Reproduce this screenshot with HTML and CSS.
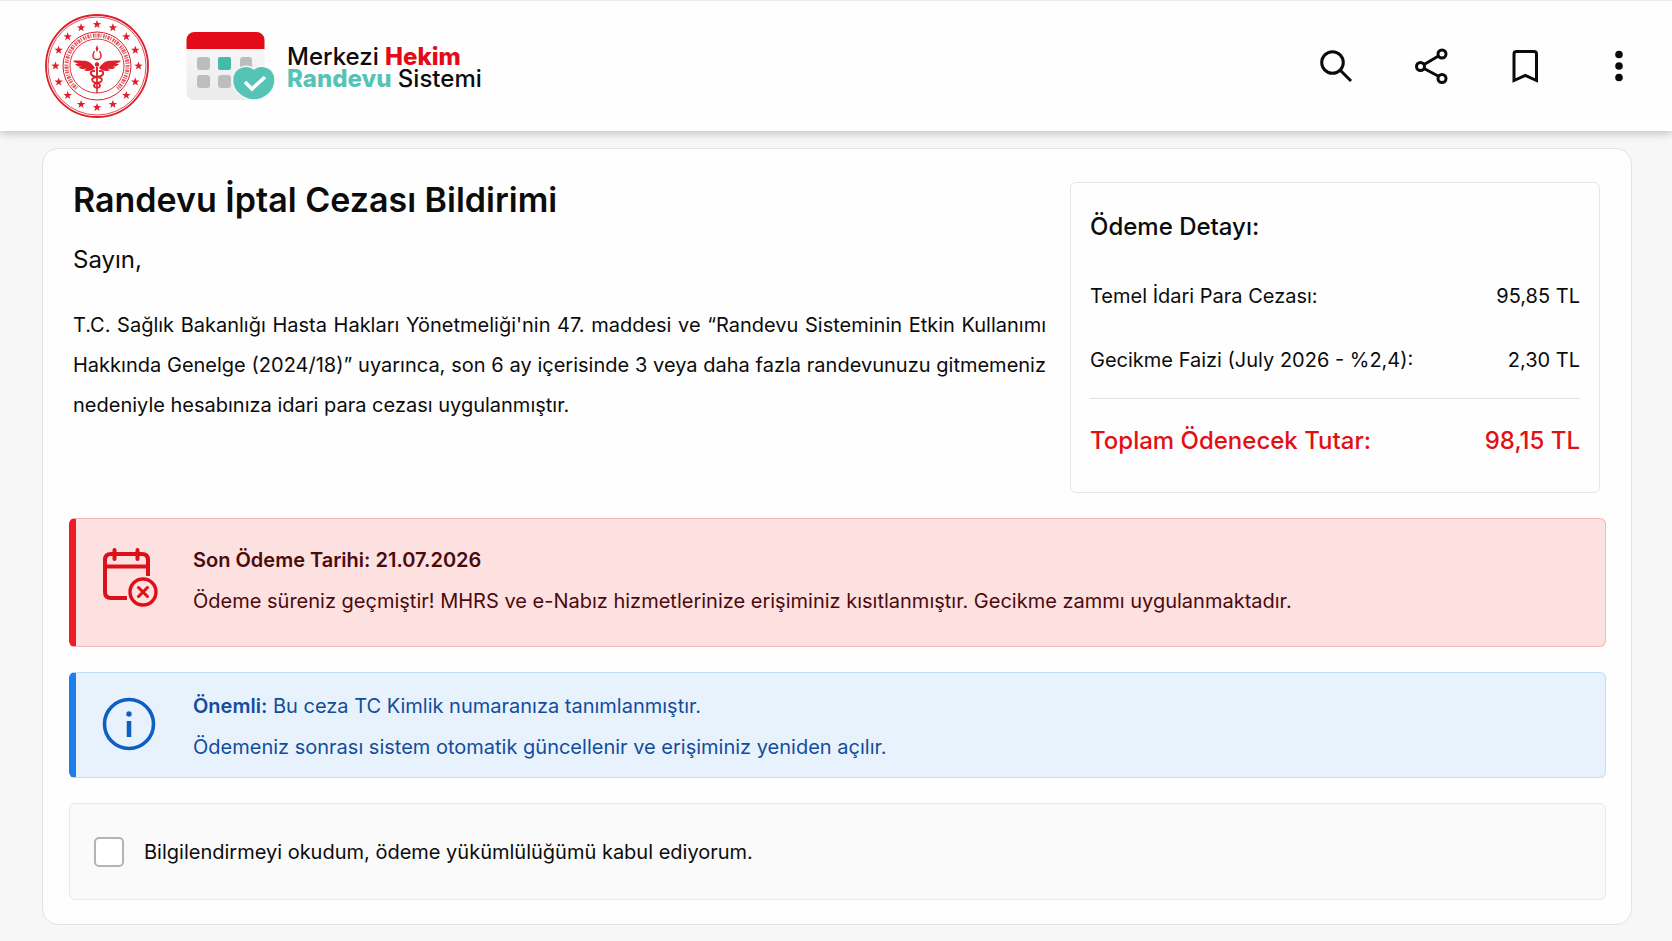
FILE: index.html
```html
<!DOCTYPE html>
<html lang="tr">
<head>
    <meta charset="UTF-8">
    <meta name="viewport" content="width=device-width, initial-scale=1.0">
    <title>Randevu İptal Cezası Bildirimi</title>
    <link rel="stylesheet" href="styles.css">
</head>
<body>
    <header class="topbar">
        <svg class="seal" viewBox="-53 -53 106 106" aria-hidden="true">
            <defs>
                <path id="star" d="M0 -4.4 L1.1 -1.4 L4.2 -1.3 L1.7 0.6 L2.6 3.6 L0 1.8 L-2.6 3.6 L-1.7 0.6 L-4.2 -1.3 L-1.1 -1.4 Z"/>
            </defs>
            <g fill="none" stroke="#dc1f2a">
                <circle r="51" stroke-width="1.8"/>
                <circle r="49" stroke-width="0.8"/>
                <circle r="34" stroke-width="1"/>
                <circle r="27" stroke-width="0.9"/>
                <path d="M-20.5 22.5 A30.5 30.5 0 1 1 20.5 22.5" stroke-width="4" stroke-dasharray="1.1 1 2.2 .9 1 1.6 1.6 .8" opacity=".75"/>
            </g>
            <g fill="#dc1f2a">
                <use href="#star" x="0" y="-41.5"/>
                <use href="#star" x="15.9" y="-38.3"/>
                <use href="#star" x="29.3" y="-29.3"/>
                <use href="#star" x="38.3" y="-15.9"/>
                <use href="#star" x="41.5" y="0"/>
                <use href="#star" x="38.3" y="15.9"/>
                <use href="#star" x="29.3" y="29.3"/>
                <use href="#star" x="15.9" y="38.3"/>
                <use href="#star" x="0" y="41.5"/>
                <use href="#star" x="-15.9" y="38.3"/>
                <use href="#star" x="-29.3" y="29.3"/>
                <use href="#star" x="-38.3" y="15.9"/>
                <use href="#star" x="-41.5" y="0"/>
                <use href="#star" x="-38.3" y="-15.9"/>
                <use href="#star" x="-29.3" y="-29.3"/>
                <use href="#star" x="-15.9" y="-38.3"/>
                <!-- wings -->
                <path d="M-2 2 C-5 -3 -9 -5.5 -14 -5.3 C-18 -5.3 -21 -6 -24 -5 C-22.5 -3.5 -20.5 -2.8 -18.5 -2.6 L-22 -1.8 C-20 .2 -18 .6 -15.8 .4 L-18.5 1.8 C-15.5 3.6 -12 3.2 -10.5 2.2 L-13 4.3 C-9 5.6 -5 5 -2 2 Z"/>
                <path d="M2 2 C5 -3 9 -5.5 14 -5.3 C18 -5.3 21 -6 24 -5 C22.5 -3.5 20.5 -2.8 18.5 -2.6 L22 -1.8 C20 .2 18 .6 15.8 .4 L18.5 1.8 C15.5 3.6 12 3.2 10.5 2.2 L13 4.3 C9 5.6 5 5 2 2 Z"/>
                <path d="M0 -21 L1.4 -17 L0 -14 L-1.4 -17 Z"/>
                <circle cy="-1.5" r="2.2"/>
                <path d="M-1 1 H1 L.7 27 H-.7 Z"/>
            </g>
            <g fill="none" stroke="#dc1f2a" stroke-width="1.8">
                <path d="M-2.5 -15 C-5.5 -10 -4 -6.5 0 -6.5 C4 -6.5 5.5 -10 2.5 -15" stroke-width="1.3"/>
                <path d="M-2 5 C-8 4 -8 10 0 11 C7 12 6 16 0 17 C-4 18 -4 21 0 22"/>
                <path d="M2 5 C8 4 8 10 0 11 C-7 12 -6 16 0 17 C4 18 4 21 0 22"/>
            </g>
        </svg>

        <div class="brand">
            <svg class="brand-mark" viewBox="0 0 90 70" aria-hidden="true">
                <defs>
                    <linearGradient id="page" x1="0" y1="0" x2="0" y2="1">
                        <stop offset="0.25" stop-color="#f6f6f6"/>
                        <stop offset="1" stop-color="#ebebeb"/>
                    </linearGradient>
                </defs>
                <rect x="0.5" y="1" width="78" height="68" rx="7" fill="url(#page)"/>
                <path d="M0.5 18 V9 A8 8 0 0 1 8.5 1 H70.5 A8 8 0 0 1 78.5 9 V18 Z" fill="#e30b17"/>
                <g fill="#bdbdbd">
                    <rect x="11" y="26" width="13" height="13" rx="3"/>
                    <rect x="54" y="26" width="12" height="13" rx="3"/>
                    <rect x="11" y="44" width="13" height="13" rx="3"/>
                    <rect x="32" y="44" width="13" height="13" rx="3"/>
                </g>
                <rect x="32" y="26" width="13" height="13" rx="2" fill="#45b9aa"/>
                <path d="M68 38 C74 33 89 35 89 49 C89 62 77 69 68 69 C59 69 46.5 62 46.5 49 C46.5 35 62 33 68 38 Z" fill="#55c4b7" stroke="#f7f7f7" stroke-width="1.5"/>
                <path d="M59 51 L66 58 L79 46" fill="none" stroke="#fff" stroke-width="3.6"/>
            </svg>
            <div class="brand-name">
                Merkezi <b class="red">Hekim</b><br>
                <b class="teal">Randevu</b> Sistemi
            </div>
        </div>

        <nav class="actions">
            <button type="button" class="icon-btn" aria-label="Ara">
                <svg viewBox="0 0 48 48"><circle cx="19.5" cy="20.5" r="10.8"/><path d="M27.5 28.5 L38 39"/></svg>
            </button>
            <button type="button" class="icon-btn" aria-label="Paylaş">
                <svg viewBox="0 0 48 48"><circle cx="35" cy="12" r="4"/><circle cx="13.5" cy="24.5" r="4"/><circle cx="35" cy="36.5" r="4"/><path d="M17.5 22.2 L31.5 14 M17.5 26.7 L31.5 34.3"/></svg>
            </button>
            <button type="button" class="icon-btn" aria-label="Kaydet">
                <svg viewBox="0 0 48 48"><path d="M13 38.500 V12 Q13 9.500 15.500 9.500 H33 Q35.500 9.500 35.500 12 V38.500 L24.300 33.500 Z"/></svg>
            </button>
            <button type="button" class="icon-btn" aria-label="Menü">
                <svg viewBox="0 0 48 48"><g fill="#0a0a0a" stroke="none"><circle cx="24" cy="12.5" r="3.8"/><circle cx="24" cy="24" r="3.8"/><circle cx="24" cy="35.5" r="3.8"/></g></svg>
            </button>
        </nav>
    </header>

    <main class="card">
        <section class="summary">
            <div class="notice">
                <h1>Randevu İptal Cezası Bildirimi</h1>
                <p class="greeting">Sayın,</p>
                <p class="body-text">T.C. Sağlık Bakanlığı Hasta Hakları Yönetmeliği'nin 47. maddesi ve “Randevu Sisteminin Etkin Kullanımı Hakkında Genelge (2024/18)” uyarınca, son 6 ay içerisinde 3 veya daha fazla randevunuzu gitmemeniz nedeniyle hesabınıza idari para cezası uygulanmıştır.</p>
            </div>

            <div class="payment">
                <h2>Ödeme Detayı:</h2>
                <table>
                    <tbody>
                        <tr><th scope="row">Temel İdari Para Cezası:</th><td>95,85 TL</td></tr>
                        <tr><th scope="row">Gecikme Faizi (July 2026 - %2,4):</th><td>2,30 TL</td></tr>
                    </tbody>
                    <tfoot>
                        <tr><th scope="row">Toplam Ödenecek Tutar:</th><td>98,15 TL</td></tr>
                    </tfoot>
                </table>
            </div>
        </section>

        <section class="alert alert-danger">
            <svg class="alert-icon" viewBox="0 0 60 60" fill="none" stroke="#dc1018" stroke-width="4" aria-hidden="true">
                <path d="M26 51 H10 Q4 51 4 45 V13 Q4 7 10 7 H41 Q47 7 47 13 V29"/>
                <path d="M4 19.5 H47"/>
                <path d="M13.5 3 V12 M36.5 3 V12" stroke-linecap="round"/>
                <circle cx="42" cy="45" r="13" stroke-width="3.4"/>
                <path d="M37.5 40.5 L46.5 49.5 M46.5 40.5 L37.5 49.5" stroke-width="3" stroke-linecap="round"/>
            </svg>
            <div class="alert-text">
                <p><strong>Son Ödeme Tarihi: 21.07.2026</strong></p>
                <p>Ödeme süreniz geçmiştir! MHRS ve e-Nabız hizmetlerinize erişiminiz kısıtlanmıştır. Gecikme zammı uygulanmaktadır.</p>
            </div>
        </section>

        <section class="alert alert-info">
            <svg class="alert-icon" viewBox="0 0 60 60" fill="none" stroke="#0d5fc0" aria-hidden="true">
                <circle cx="28" cy="30" r="24.5" stroke-width="3.6"/>
                <path d="M28 27 V43" stroke-width="4.5"/>
                <circle cx="28" cy="20" r="2.7" fill="#0d5fc0" stroke="none"/>
            </svg>
            <div class="alert-text">
                <p><strong>Önemli:</strong> Bu ceza TC Kimlik numaranıza tanımlanmıştır.</p>
                <p>Ödemeniz sonrası sistem otomatik güncellenir ve erişiminiz yeniden açılır.</p>
            </div>
        </section>

        <div class="consent">
            <input type="checkbox" id="consent">
            <label for="consent">Bilgilendirmeyi okudum, ödeme yükümlülüğümü kabul ediyorum.</label>
        </div>
    </main>
</body>
</html>
```
FILE: styles.css
```css
* {
    box-sizing: border-box;
}

body {
    margin: 0;
    font-family: Inter, "Open Sans", sans-serif;
    font-size: 20px;
    color: #0c0c0c;
    background-color: #f7f7f7;
}

h1, h2, p {
    margin: 0;
}

/* Top bar */
.topbar {
    display: flex;
    align-items: center;
    height: 131px;
    padding: 0 29px 0 44px;
    background-color: #fefefe;
    border-top: 1px solid #ececec;
    box-shadow: 0 1px 10px rgba(0, 0, 0, 0.28);
}

.seal {
    width: 106px;
    height: 106px;
}

.brand {
    display: flex;
    align-items: center;
    gap: 11px;
    margin-left: 36px;
}

.brand-mark {
    width: 90px;
    height: 70px;
}

.brand-name {
    font-size: 24px;
    line-height: 22px;
    font-weight: 500;
    padding-top: 4px;
}

.brand-name b {
    font-weight: 800;
}

.red {
    color: #e30b17;
}

.teal {
    color: #55c4b7;
}

.actions {
    display: flex;
    gap: 46px;
    margin-left: auto;
}

.icon-btn {
    width: 48px;
    height: 48px;
    padding: 0;
    border: 0;
    background: none;
    cursor: pointer;
}

.icon-btn svg {
    display: block;
    width: 48px;
    height: 48px;
    fill: none;
    stroke: #0a0a0a;
    stroke-width: 3;
}

/* Card */
.card {
    display: flex;
    flex-direction: column;
    gap: 25px;
    margin: 17px 40px 17px 42px;
    padding: 33px 25px 24px 26px;
    background-color: #fefefe;
    border: 1px solid #e2e2e2;
    border-radius: 16px;
}

.summary {
    display: grid;
    grid-template-columns: 1fr 530px;
    gap: 24px;
    padding: 0 6px 0 4px;
}

.notice h1 {
    font-size: 34px;
    line-height: 36px;
    font-weight: 600;
}

.greeting {
    margin-top: 26px;
    font-size: 24px;
    line-height: 32px;
}

.body-text {
    margin-top: 29px;
    line-height: 40px;
    text-align: justify;
}

.payment {
    padding: 28px 19px 9px;
    border: 1px solid #e6e6e6;
    border-radius: 6px;
}

.payment h2 {
    margin-bottom: 21px;
    font-size: 24px;
    line-height: 32px;
    font-weight: 500;
}

.payment table {
    width: 100%;
    border-collapse: collapse;
}

.payment th,
.payment td {
    height: 64px;
    padding: 0;
    text-align: left;
    font-weight: 400;
}

.payment td {
    text-align: right;
}

.payment tbody tr:last-child > * {
    height: 70px;
    padding-bottom: 6px;
}

.payment tfoot th,
.payment tfoot td {
    height: 85px;
    border-top: 1px solid #e2e2e2;
    font-size: 24px;
    font-weight: 500;
    color: #e30f14;
}

/* Alerts */
.alert {
    display: flex;
    align-items: flex-start;
    gap: 32px;
    border: 1px solid;
    border-left-width: 7px;
    border-radius: 6px;
}

.alert-icon {
    flex: none;
    width: 60px;
    height: 60px;
}

.alert-text {
    line-height: 41px;
}

.alert-text strong {
    font-weight: 600;
}

.alert-danger {
    padding: 21px 25px 24px;
    background-color: #fde0e0;
    border-color: #f9b4b4;
    border-left-color: #ee1c25;
    color: #4a0a0e;
}

.alert-danger .alert-icon {
    margin-top: 7px;
}

.alert-info {
    padding: 13px 25px 9px;
    background-color: #e8f2fd;
    border-color: #bfdcf9;
    border-left-color: #1c7fec;
    color: #124d9c;
}

.alert-info .alert-icon {
    margin-top: 8px;
}

/* Consent */
.consent {
    display: flex;
    align-items: center;
    gap: 20px;
    min-height: 97px;
    padding: 0 24px;
    background-color: #fafafa;
    border: 1px solid #e8e8e8;
    border-radius: 6px;
}

.consent input {
    appearance: none;
    width: 30px;
    height: 30px;
    margin: 0;
    background-color: #fff;
    border: 2px solid #b4b4b4;
    border-radius: 5px;
}

.consent input:checked {
    background-color: #1c7fec;
}
```
